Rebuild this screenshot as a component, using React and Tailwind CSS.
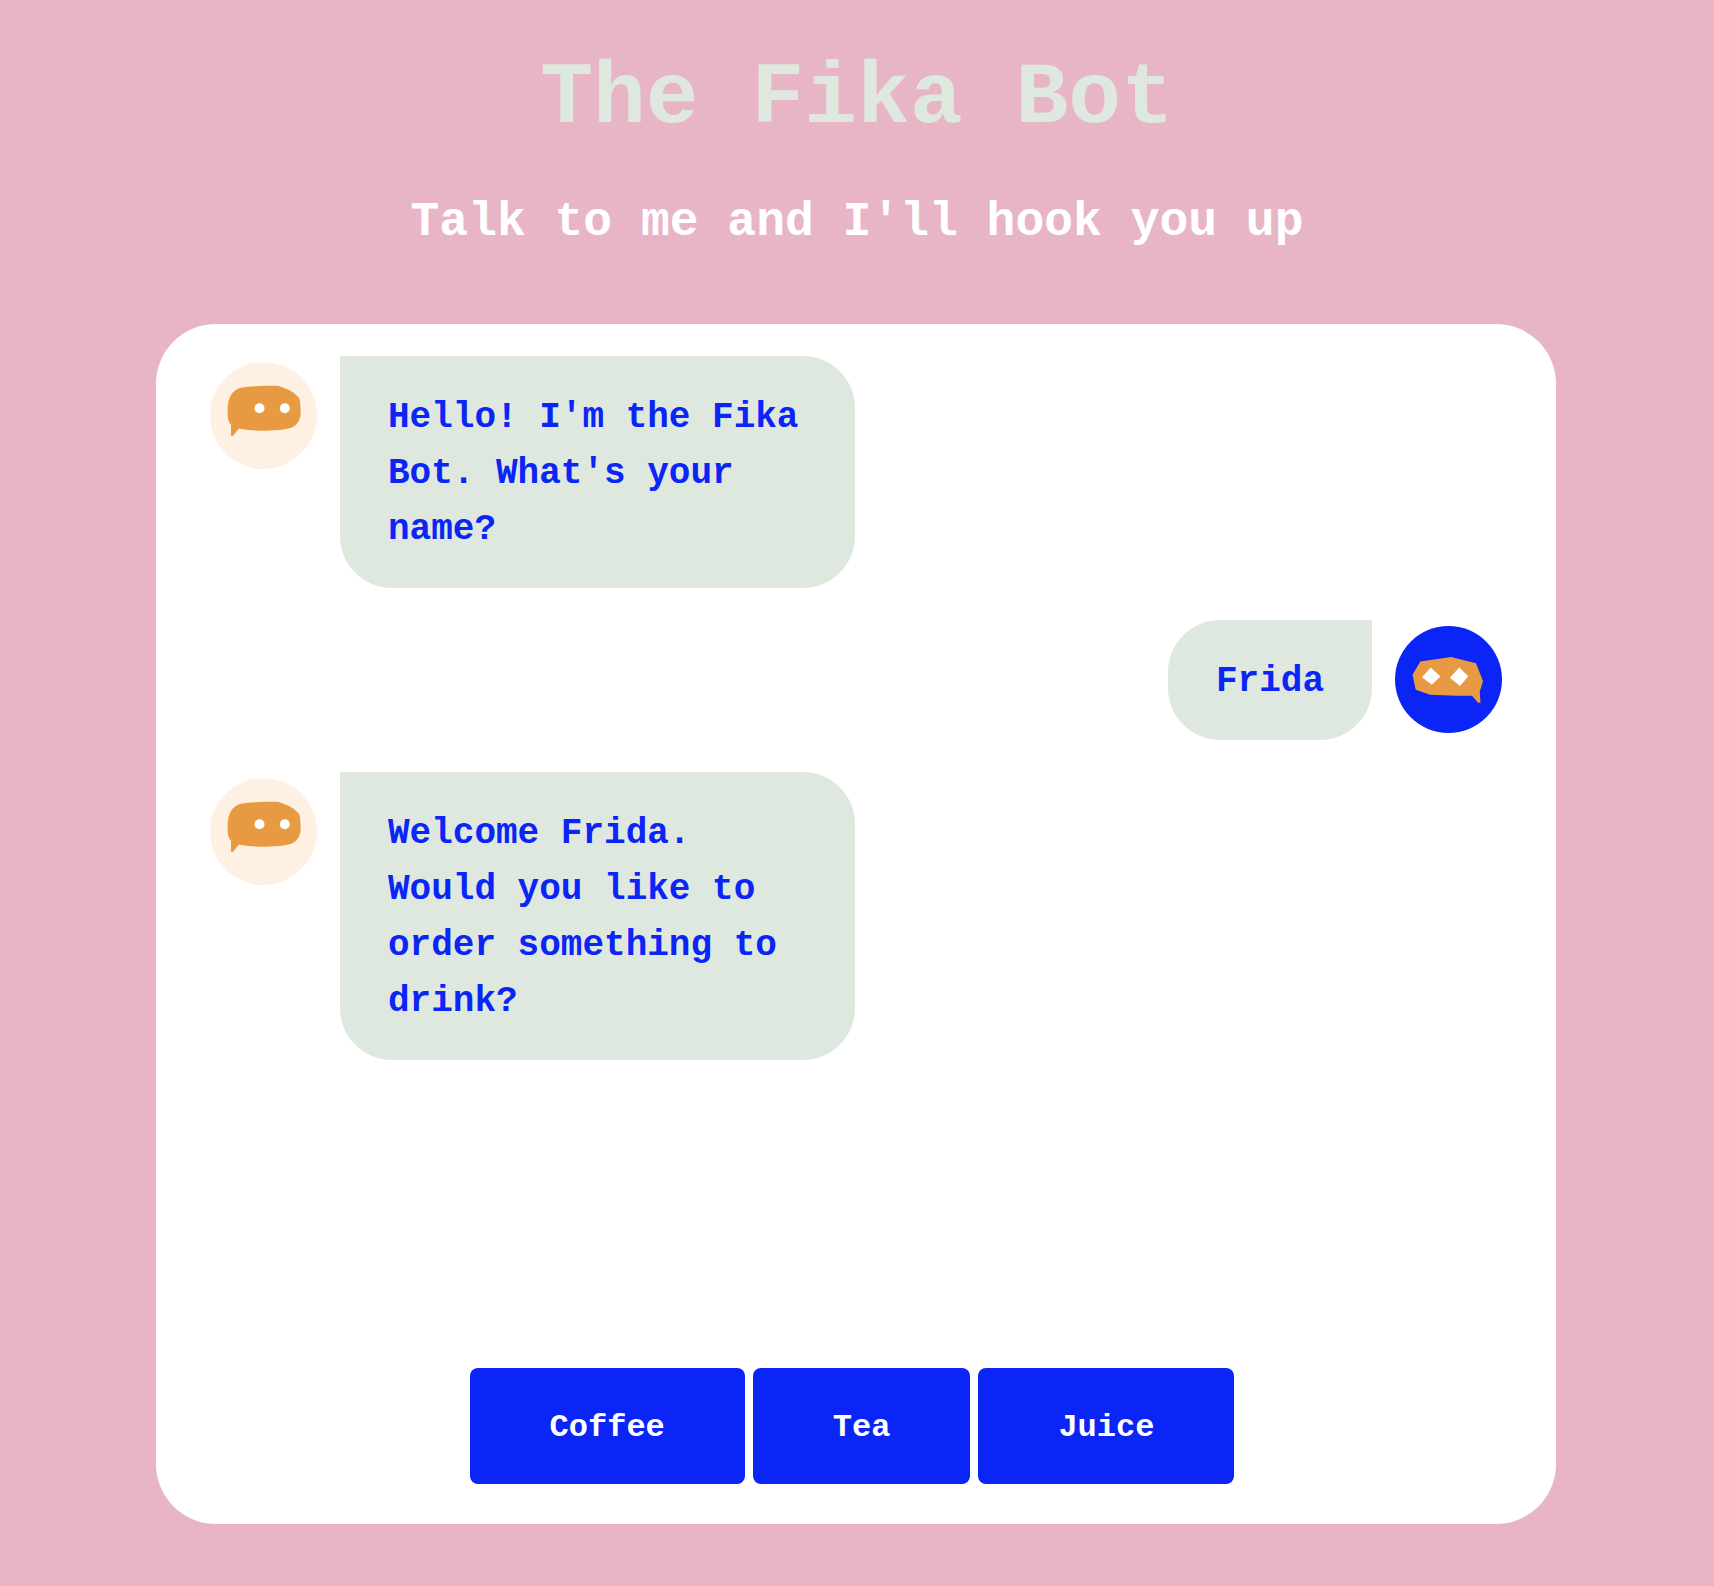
function BotAvatar() {
  return (
    <svg viewBox="0 0 107 107" className="mt-1.5 size-[107px] shrink-0" role="img" aria-label="Bot">
      <circle cx="53.5" cy="53.5" r="53.5" fill="#fef1e4" />
      <path
        d="M17.7 47C17.7 36 22 28 31 25.7C38 24 58 23.7 68 23.8C76 26 86 31 89.3 36.5C90.6 40 91 52 90.3 55C88.5 61 86 64 80.5 66C71 68.5 58 68.7 50.5 68.7C42 68.4 34 67.8 29 66.5L23 73.8Q21.3 74.3 21 73.3V63Q17.8 59.5 17.7 53Z"
        fill="#e89a42"
      />
      <circle cx="49.5" cy="46.2" r="5" fill="#fff" />
      <circle cx="74.8" cy="46.2" r="5" fill="#fff" />
    </svg>
  );
}

function UserAvatar() {
  return (
    <svg viewBox="0 0 107 107" className="mt-1.5 size-[107px] shrink-0" role="img" aria-label="You">
      <circle cx="53.5" cy="53.5" r="53.5" fill="#0a25f5" />
      <path
        d="M25.3 35.5L56 31L81 37.2L88 55L84.7 66L85.5 76.8H83L77 69.8L62 69.7L35 68.8L20.7 63.8L17.5 48.8Z"
        fill="#e89a42"
      />
      <path d="M35.8 41.5L45.3 50.5L36.8 58.8L27 51.2Z" fill="#fff" />
      <path d="M64.3 41.5L73.3 50.3L65 60L54.8 51.7Z" fill="#fff" />
    </svg>
  );
}

const messages = [
  { from: "bot", text: "Hello! I'm the Fika Bot. What's your name?" },
  { from: "user", text: "Frida" },
  { from: "bot", text: "Welcome Frida. Would you like to order something to drink?" },
];

const choices = ["Coffee", "Tea", "Juice"];

function Message({ from, text }) {
  const isBot = from === "bot";
  return (
    <li className={isBot ? "flex items-start gap-[23px]" : "flex flex-row-reverse items-start gap-[23px]"}>
      {isBot ? <BotAvatar /> : <UserAvatar />}
      <p
        className={
          isBot
            ? "max-w-[515px] rounded-[52px] rounded-tl-none bg-[#dfe8df] px-12 pt-[34px] pb-[30px]"
            : "max-w-[515px] rounded-[52px] rounded-tr-none bg-[#dfe8df] px-12 pt-[34px] pb-[30px]"
        }
      >
        {text}
      </p>
    </li>
  );
}

export default function App() {
  return (
    <div className="flex min-h-screen flex-col items-center bg-[#e8b5c6] pt-[43px] pb-[62px] font-['Liberation_Mono',monospace]">
      <h1 className="text-center text-[88px] leading-[112px] font-bold text-[#dfe8df]">The Fika Bot</h1>
      <h2 className="mt-[35px] text-center text-[48px] leading-[64px] font-bold text-white">
        Talk to me and I'll hook you up
      </h2>
      <main className="mt-[70px] mr-0.5 flex w-full max-w-[1400px] flex-1 flex-col justify-between rounded-[60px] bg-white px-[54px] pt-8 pb-10">
        <ul className="flex flex-col gap-8 text-[36px] leading-[56px] font-bold text-[#0a25f5]">
          {messages.map((m) => (
            <Message key={m.text} from={m.from} text={m.text} />
          ))}
        </ul>
        <div className="mt-8 flex flex-wrap justify-center">
          {choices.map((c) => (
            <button
              key={c}
              type="button"
              className="mr-2 rounded-lg bg-[#0a25f5] px-20 pt-10 pb-9 text-[32px] leading-[40px] font-semibold text-white"
            >
              {c}
            </button>
          ))}
        </div>
      </main>
    </div>
  );
}
